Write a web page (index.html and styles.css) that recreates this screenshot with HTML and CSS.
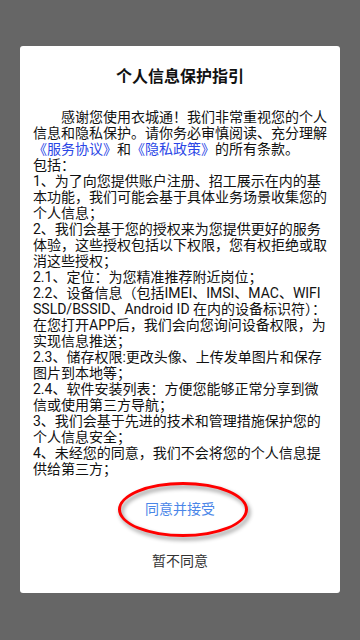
FILE: index.html
```html
<!DOCTYPE html>
<html lang="zh-CN">
<head>
<meta charset="utf-8">
<meta name="viewport" content="width=360, initial-scale=1">
<link rel="stylesheet" href="styles.css">
<title>个人信息保护指引</title>
</head>
<body>
<div class="dialog">
  <h1 class="title">个人信息保护指引</h1>
  <div class="content">
    <p class="intro">感谢您使用衣城通！我们非常重视您的个人信息和隐私保护。请你务必审慎阅读、充分理解<a class="link">《服务协议》</a>和<a class="link">《隐私政策》</a>的所有条款。</p>
    <p>包括：</p>
    <p>1、为了向您提供账户注册、招工展示在内的基本功能，我们可能会基于具体业务场景收集您的个人信息；</p>
    <p>2、我们会基于您的授权来为您提供更好的服务体验，这些授权包括以下权限，您有权拒绝或取消这些授权；</p>
    <p>2.1、定位：为您精准推荐附近岗位；</p>
    <p>2.2、设备信息（包括IMEI、IMSI、MAC、WIFI SSLD/BSSID、Android ID 在内的设备标识符）：在您打开APP后，我们会向您询问设备权限，为实现信息推送；</p>
    <p>2.3、储存权限:更改头像、上传发单图片和保存图片到本地等；</p>
    <p>2.4、软件安装列表：方便您能够正常分享到微信或使用第三方导航；</p>
    <p>3、我们会基于先进的技术和管理措施保护您的个人信息安全；</p>
    <p>4、未经您的同意，我们不会将您的个人信息提供给第三方；</p>
  </div>
  <div class="actions">
    <button class="btn btn-agree">同意并接受</button>
    <button class="btn btn-decline">暂不同意</button>
  </div>
  <div class="ring"></div>
</div>
</body>
</html>
```
FILE: styles.css
```css
html, body {
  margin: 0;
  padding: 0;
}
body {
  background: #666666;
  width: 360px;
  height: 640px;
  overflow: hidden;
  font-family: Roboto, "Noto Sans CJK SC", sans-serif;
  padding-top: 46px;
  box-sizing: border-box;
}
.dialog {
  position: relative;
  margin: 0 20px;
  width: 320px;
  height: 547px;
  background: #ffffff;
  border-radius: 3px;
  box-sizing: border-box;
  padding: 20px 13px 0;
}
.title {
  margin: 0;
  font-size: 16px;
  line-height: 22px;
  font-weight: 700;
  text-align: center;
  color: #111;
}
.content {
  margin-top: 21px;
  font-size: 14px;
  line-height: 16px;
  color: #111;
}
.content p {
  margin: 0;
}
.intro {
  text-indent: 28px;
}
.link {
  color: #2a46e6;
}
.actions {
  margin-top: 5px;
  display: flex;
  flex-direction: column;
}
.btn {
  height: 52px;
  border: 0;
  background: transparent;
  font-family: inherit;
  font-size: 14px;
  padding: 0;
}
.btn-agree {
  color: #4a86e8;
}
.btn-decline {
  color: #333333;
}
.ring {
  position: absolute;
  left: 98px;
  top: 436px;
  width: 130px;
  height: 55px;
  box-sizing: border-box;
  border: 3px solid #ff0000;
  border-radius: 50%;
  filter: drop-shadow(2px 3px 2px rgba(0, 0, 0, 0.45));
}
```
